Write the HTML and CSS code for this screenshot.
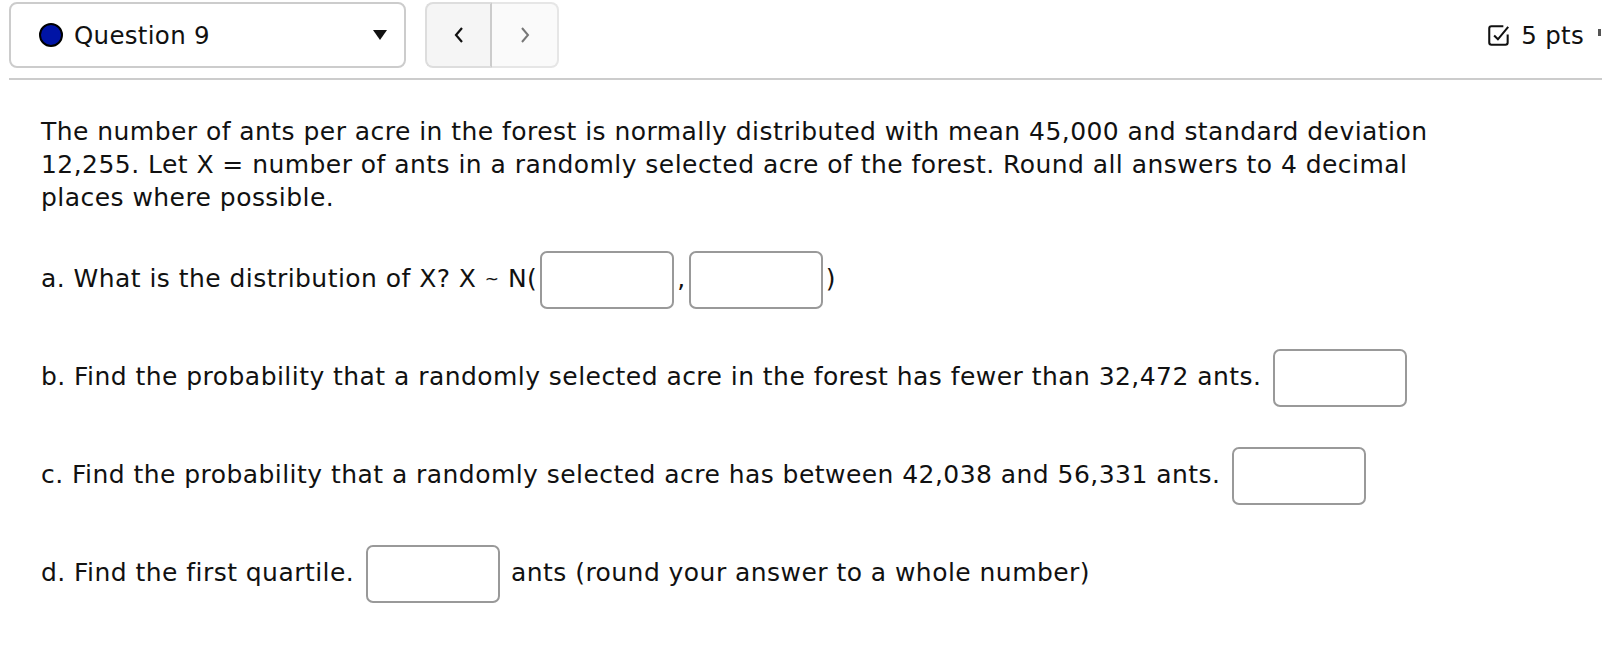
FILE: index.html
```html
<!DOCTYPE html>
<html lang="en">
<head>
    <meta charset="UTF-8">
    <title>Question 9</title>
    <link rel="stylesheet" href="styles.css">
</head>
<body>
    <div class="header">
        <div class="select">
            <span class="dot"></span>
            <span class="select-label">Question 9</span>
            <span class="caret"></span>
        </div>
        <div class="nav">
            <button class="nav-btn prev">
                <svg width="12" height="18" viewBox="0 0 12 18"><polyline points="9,2 3,9 9,16" fill="none" stroke="#111" stroke-width="2.2"/></svg>
            </button>
            <button class="nav-btn next">
                <svg width="12" height="18" viewBox="0 0 12 18"><polyline points="3,2 9,9 3,16" fill="none" stroke="#777" stroke-width="2"/></svg>
            </button>
        </div>
        <div class="points">
            <svg width="26" height="26" viewBox="0 0 24 24"><path d="M20 11.5v7.5a2 2 0 0 1-2 2H5a2 2 0 0 1-2-2V6a2 2 0 0 1 2-2h11" fill="none" stroke="#111" stroke-width="1.9"/><polyline points="7.5,12.5 11,16 20.5,4.5" fill="none" stroke="#111" stroke-width="1.9"/></svg>
            <span>5 pts</span>
        </div>
        <span class="edge-mark"></span>
    </div>
    <div class="rule"></div>

    <div class="question">
        <p class="intro">The number of ants per acre in the forest is normally distributed with mean 45,000 and standard deviation 12,255. Let X = number of ants in a randomly selected acre of the forest. Round all answers to 4 decimal places where possible.</p>
        <p>a. What is the distribution of X? X <span class="tilde">~</span> N(<input type="text" class="answer">,<input type="text" class="answer">)</p>
        <p>b. Find the probability that a randomly selected acre in the forest has fewer than 32,472 ants. <input type="text" class="answer"></p>
        <p>c. Find the probability that a randomly selected acre has between 42,038 and 56,331 ants. <input type="text" class="answer"></p>
        <p>d. Find the first quartile. <input type="text" class="answer"> ants (round your answer to a whole number)</p>
    </div>
</body>
</html>
```

FILE: styles.css
```css
body { margin: 0; font-family: "DejaVu Sans", Verdana, sans-serif; color: #111; background: #fff; }
.header { display: flex; align-items: center; padding: 2px 0 0 9px; height: 66px; position: relative; }
.select { display: flex; align-items: center; width: 397px; height: 66px; box-sizing: border-box; border: 2px solid #ccc; border-radius: 8px; padding: 0 17px 0 28px; }
.dot { width: 20px; height: 20px; border-radius: 50%; background: #0014a6; border: 2px solid #000; }
.select-label { margin-left: 11px; font-size: 24.5px; letter-spacing: 0.3px; flex: 1; }
.caret { width: 0; height: 0; border-left: 7px solid transparent; border-right: 7px solid transparent; border-top: 10px solid #111; }
.nav { display: flex; margin-left: 19px; }
.nav-btn { width: 67px; height: 66px; display: flex; align-items: center; justify-content: center; border: 2px solid #ddd; padding: 0; }
.prev { background: #f5f5f5; border-radius: 8px 0 0 8px; border-right-color: #ccc; }
.next { background: #fafafa; border-left: none; border-radius: 0 8px 8px 0; border-color: #e6e6e6; }
.points { margin-left: auto; margin-right: 18px; display: flex; align-items: center; gap: 9px; font-size: 24.5px; letter-spacing: 0.3px; }
.edge-mark { position: absolute; right: 1px; top: 29px; width: 3px; height: 7px; background: #555; }
.rule { margin: 10px 0 0 9px; border-top: 2px solid #ccc; }
.question { padding: 0 0 0 41px; font-size: 25px; letter-spacing: 0.45px; line-height: 33px; }
.question p { margin: 0 0 40px; max-width: 1410px; }
.question .intro { margin: 35px 0 37px; }
.tilde { font-size: 17px; line-height: 1; vertical-align: 2px; }
.answer { width: 134px; height: 58px; box-sizing: border-box; border: 2px solid #999; border-radius: 7px; margin: 0 3px; vertical-align: middle; font-size: 20px; }
```
